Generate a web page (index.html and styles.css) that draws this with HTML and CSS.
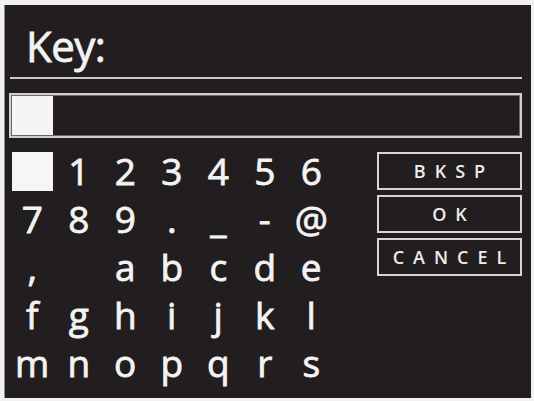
FILE: index.html
```html
<!DOCTYPE html>
<html>
<head>
<meta charset="utf-8">
<link rel="stylesheet" href="styles.css">
</head>
<body>
<div class="screen">
  <div class="title">Key:</div>
  <div class="rule"></div>
  <div class="entry"><div class="cursor"></div></div>
  <div class="main">
    <div class="keys">
      <div class="key"><div class="sel"></div></div>
      <div class="key">1</div><div class="key">2</div><div class="key">3</div><div class="key">4</div><div class="key">5</div><div class="key">6</div>
      <div class="key">7</div><div class="key">8</div><div class="key">9</div><div class="key">.</div><div class="key">_</div><div class="key">-</div><div class="key">@</div>
      <div class="key">,</div><div class="key"></div><div class="key">a</div><div class="key">b</div><div class="key">c</div><div class="key">d</div><div class="key">e</div>
      <div class="key">f</div><div class="key">g</div><div class="key">h</div><div class="key">i</div><div class="key">j</div><div class="key">k</div><div class="key">l</div>
      <div class="key">m</div><div class="key">n</div><div class="key">o</div><div class="key">p</div><div class="key">q</div><div class="key">r</div><div class="key">s</div>
    </div>
    <div class="buttons">
      <div class="btn">BKSP</div>
      <div class="btn">OK</div>
      <div class="btn">CANCEL</div>
    </div>
  </div>
</div>
</body>
</html>
```
FILE: styles.css
```css
html, body {
  margin: 0;
  padding: 0;
  background: #f1f1f1;
}
body {
  width: 534px;
  height: 401px;
  overflow: hidden;
  font-family: "Open Sans", "Noto Sans", sans-serif;
}
.screen {
  margin: 5px 0 0 4px;
  width: 527px;
  height: 393px;
  box-sizing: border-box;
  background: #221e1f;
  border-left: 1px solid #8a8a8a;
  padding: 16px 9px 0 4px;
  color: #f3f3f3;
}
.title {
  height: 50px;
  line-height: 50px;
  font-size: 42px;
  padding-left: 17px;
  letter-spacing: -0.5px;
  -webkit-text-stroke: 0.8px #f3f3f3;
}
.rule {
  margin: 6px 0 0 1px;
  height: 2px;
  background: #c9c9c9;
}
.entry {
  margin-top: 14px;
  height: 45px;
  box-sizing: border-box;
  border: 2px solid #cfcfcf;
  box-shadow: inset 0 0 0 1px #6a6a6a;
  padding: 1px;
  display: flex;
}
.cursor {
  width: 41px;
  background: #f5f5f5;
}
.main {
  display: flex;
  justify-content: space-between;
  margin-top: 9px;
}
.keys {
  display: grid;
  grid-template-columns: repeat(7, 46.5px);
  grid-auto-rows: 48px;
}
.key {
  display: flex;
  align-items: center;
  justify-content: center;
  font-size: 37px;
  line-height: 48px;
  -webkit-text-stroke: 0.8px #f3f3f3;
}
.sel {
  width: 41px;
  height: 39px;
  background: #f6f6f6;
}
.buttons {
  margin-top: 5px;
  width: 145px;
  display: flex;
  flex-direction: column;
  gap: 5px;
}
.btn {
  height: 38px;
  box-sizing: border-box;
  border: 2px solid #d6d6d6;
  display: flex;
  align-items: center;
  justify-content: center;
  font-size: 18px;
  font-weight: 600;
  letter-spacing: 9px;
  text-indent: 9px;
  color: #ececec;
}
```
